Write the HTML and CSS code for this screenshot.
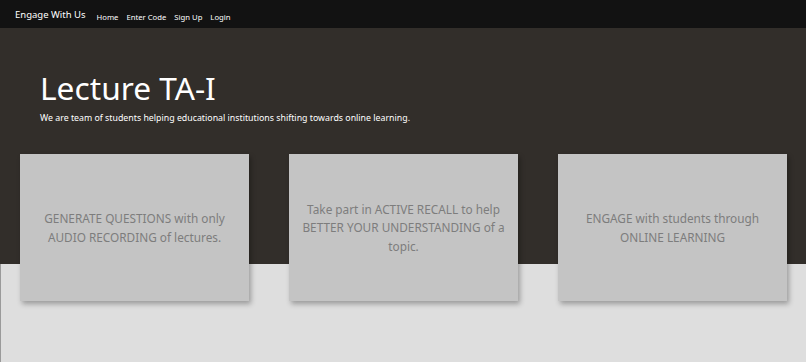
FILE: index.html
```html
<!DOCTYPE html>
<html lang="en">
<head>
    <meta charset="UTF-8">
    <meta name="viewport" content="width=device-width, initial-scale=1.0">
    <title>Lecture TA-I</title>
    <link rel="stylesheet" href="styles.css">
</head>
<body>
    <nav class="navbar">
        <a class="brand" href="#">Engage With Us</a>
        <ul class="nav-links">
            <li><a href="#">Home</a></li>
            <li><a href="#">Enter Code</a></li>
            <li><a href="#">Sign Up</a></li>
            <li><a href="#">Login</a></li>
        </ul>
    </nav>
    <header class="hero">
        <h1>Lecture TA-I</h1>
        <p class="tagline">We are team of students helping educational institutions shifting towards online learning.</p>
    </header>
    <section class="features">
        <div class="card">GENERATE QUESTIONS with only AUDIO RECORDING of lectures.</div>
        <div class="card">Take part in ACTIVE RECALL to help BETTER YOUR UNDERSTANDING of a topic.</div>
        <div class="card">ENGAGE with students through ONLINE LEARNING</div>
    </section>
</body>
</html>
```
FILE: styles.css
```css
* {
    margin: 0;
    padding: 0;
    box-sizing: border-box;
}
body {
    font-family: 'Noto Sans', 'Open Sans', sans-serif;
    background: #dedede;
    min-height: 100vh;
    box-shadow: inset 1px 0 #9a9a9a;
}
.navbar {
    height: 28px;
    background: #121212;
    display: flex;
    align-items: center;
    padding-left: 15px;
}
.brand {
    color: #fff;
    font-size: 9.5px;
    text-decoration: none;
    margin-right: 11px;
}
.nav-links {
    list-style: none;
    display: flex;
    gap: 8px;
}
.nav-links a {
    color: #fff;
    font-size: 7.7px;
    text-decoration: none;
}
.hero {
    background: #322e2a;
    height: 236px;
    padding: 40px 0 0 40px;
}
h1 {
    font-weight: 400;
    font-size: 31.7px;
    line-height: 40px;
    color: #fff;
}
.tagline {
    color: #fff;
    font-size: 8.8px;
    margin-top: 4px;
}
.features {
    display: flex;
    gap: 40px;
    padding: 0 19px 0 20px;
    margin-top: -110px;
}
.card {
    flex: 1;
    height: 147px;
    background: #c4c4c4;
    box-shadow: 2px 3px 5px rgba(0, 0, 0, 0.3);
    display: flex;
    align-items: center;
    justify-content: center;
    text-align: center;
    padding: 0 12px;
    color: #7d7d7d;
    font-size: 11.8px;
    line-height: 18.5px;
}
```
